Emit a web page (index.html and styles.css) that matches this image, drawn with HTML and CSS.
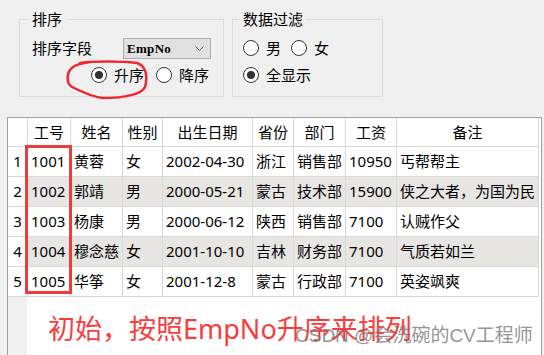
FILE: index.html
```html
<!DOCTYPE html>
<html lang="zh">
<head>
<meta charset="utf-8">
<title>排序</title>
<link rel="stylesheet" href="styles.css">
</head>
<body>
<div class="top">
  <div class="group g1">
    <div class="group-title">排序</div>
    <div class="field-row">
      <span class="field-label">排序字段</span>
      <div class="combo">
        <span class="combo-text">EmpNo</span>
        <svg class="chev" width="9" height="5" viewBox="0 0 9 5"><polyline points="0.5,0.5 4.5,4.5 8.5,0.5" fill="none" stroke="#555" stroke-width="1"/></svg>
      </div>
    </div>
    <div class="radio-row r-sort">
      <label class="radio"><span class="dot checked"></span><span>升序</span></label>
      <label class="radio"><span class="dot"></span><span>降序</span></label>
    </div>
  </div>
  <div class="group g2">
    <div class="group-title">数据过滤</div>
    <div class="radio-row r-sex">
      <label class="radio"><span class="dot"></span><span>男</span></label>
      <label class="radio"><span class="dot"></span><span>女</span></label>
    </div>
    <div class="radio-row r-all">
      <label class="radio"><span class="dot checked"></span><span>全显示</span></label>
    </div>
  </div>
</div>

<div class="frame">
  <div class="grid">
    <div class="cell h rh"></div>
    <div class="cell h">工号</div>
    <div class="cell h">姓名</div>
    <div class="cell h">性别</div>
    <div class="cell h">出生日期</div>
    <div class="cell h">省份</div>
    <div class="cell h">部门</div>
    <div class="cell h">工资</div>
    <div class="cell h">备注</div>

    <div class="cell rh">1</div>
    <div class="cell">1001</div><div class="cell">黄蓉</div><div class="cell">女</div><div class="cell">2002-04-30</div><div class="cell">浙江</div><div class="cell">销售部</div><div class="cell">10950</div><div class="cell">丐帮帮主</div>

    <div class="cell rh">2</div>
    <div class="cell alt">1002</div><div class="cell alt">郭靖</div><div class="cell alt">男</div><div class="cell alt">2000-05-21</div><div class="cell alt">蒙古</div><div class="cell alt">技术部</div><div class="cell alt">15900</div><div class="cell alt">侠之大者，为国为民</div>

    <div class="cell rh">3</div>
    <div class="cell">1003</div><div class="cell">杨康</div><div class="cell">男</div><div class="cell">2000-06-12</div><div class="cell">陕西</div><div class="cell">销售部</div><div class="cell">7100</div><div class="cell">认贼作父</div>

    <div class="cell rh">4</div>
    <div class="cell alt">1004</div><div class="cell alt">穆念慈</div><div class="cell alt">女</div><div class="cell alt">2001-10-10</div><div class="cell alt">吉林</div><div class="cell alt">财务部</div><div class="cell alt">7100</div><div class="cell alt">气质若如兰</div>

    <div class="cell rh">5</div>
    <div class="cell">1005</div><div class="cell">华筝</div><div class="cell">女</div><div class="cell">2001-12-8</div><div class="cell">蒙古</div><div class="cell">行政部</div><div class="cell">7100</div><div class="cell">英姿飒爽</div>
  </div>
  <p class="note">初始，按照EmpNo升序来排列</p>
</div>

<div class="mark-rect"></div>
<svg class="mark-loop" width="544" height="110" viewBox="0 0 544 110">
  <path d="M80,63 C95,61 120,61 137,63 C146,66 148,76 145,87 C142,94 125,98 103,98 C92,97 80,91 72,87 C66,83 66,72 73,67 C77,64 83,63 90,62" fill="none" stroke="#f2262b" stroke-width="2.5" stroke-linecap="round"/>
</svg>
<div class="watermark">CSDN @会洗碗的CV工程师</div>
</body>
</html>
```

FILE: styles.css
```css
html, body {
  margin: 0;
  padding: 0;
}
body {
  position: relative;
  width: 544px;
  height: 355px;
  overflow: hidden;
  background: #f0f0f0;
  color: #000;
  font-family: "Noto Sans", "Noto Sans CJK SC", sans-serif;
  font-size: 15px;
}

.top {
  display: flex;
  gap: 8px;
  padding: 19px 0 0 19px;
}
.group {
  box-sizing: border-box;
  height: 78px;
  border: 1px solid #dcdcdc;
}
.g1 { width: 205px; }
.g2 { width: 151px; }
.group-title {
  width: max-content;
  margin: -10px 0 0 7px;
  line-height: 18px;
  background: #f0f0f0;
}
.g1 .group-title { padding: 0 5px; }
.g2 .group-title { padding: 0 3px; }

.field-row {
  display: flex;
  align-items: center;
  height: 21px;
  margin: 10px 0 0 12px;
}
.field-label {
  width: 91px;
  line-height: 21px;
}
.combo {
  box-sizing: border-box;
  width: 88px;
  height: 21px;
  display: flex;
  align-items: center;
  justify-content: space-between;
  padding: 0 6px 0 3px;
  border: 1px solid #adadad;
  background: #e1e1e1;
}
.combo-text {
  font-family: "Liberation Serif", serif;
  font-weight: bold;
  font-size: 13px;
  letter-spacing: 0.3px;
  line-height: 19px;
}
.chev { display: block; }

.radio-row {
  display: flex;
  align-items: center;
  height: 16px;
}
.radio {
  display: flex;
  align-items: center;
  gap: 7px;
  line-height: 16px;
}
.r-sort { margin: 8px 0 0 71px; gap: 12px; }
.r-sex { margin: 12px 0 0 10px; gap: 10px; }
.r-all { margin: 11px 0 0 10px; }

.dot {
  box-sizing: border-box;
  width: 16px;
  height: 16px;
  border: 1px solid #333;
  border-radius: 50%;
  background: #fff;
  display: flex;
  align-items: center;
  justify-content: center;
}
.dot.checked::after {
  content: "";
  width: 8px;
  height: 8px;
  border-radius: 50%;
  background: #333;
}

.frame {
  box-sizing: border-box;
  width: 535px;
  height: 238px;
  margin: 20px 0 0 7px;
  border: 1px solid #a0a0a0;
  border-bottom: none;
  background: linear-gradient(to right, #f0f0f0 19px, #fff 19px);
}
.grid {
  display: grid;
  grid-template-columns: 20px 43px 52px 40px 90px 41px 52px 51px 142px;
}
.cell {
  box-sizing: border-box;
  height: 30px;
  padding-left: 3px;
  line-height: 29px;
  white-space: nowrap;
  overflow: hidden;
  background: #fff;
  border-right: 1px solid #d8d8d8;
  border-bottom: 1px solid #d8d8d8;
}
.cell.h {
  height: 29px;
  padding: 1px 0 0;
  line-height: 27px;
  text-align: center;
}
.cell.rh {
  padding: 0;
  text-align: center;
}
.cell.alt { background: #e8e6e3; }

.note {
  margin: 17px 0 0 40px;
  color: #fa3c3c;
  font-size: 27px;
  line-height: 30px;
}

.mark-rect {
  position: absolute;
  left: 25px;
  top: 145px;
  width: 47px;
  height: 149px;
  box-sizing: border-box;
  border: 3px solid #ef3b3b;
}
.mark-loop {
  position: absolute;
  left: 0;
  top: 0;
  pointer-events: none;
}
.watermark {
  position: absolute;
  left: 295px;
  top: 324px;
  font-family: "Liberation Sans", "Noto Sans CJK SC", sans-serif;
  font-size: 19px;
  line-height: 24px;
  color: rgba(120, 120, 120, 0.8);
}
```
